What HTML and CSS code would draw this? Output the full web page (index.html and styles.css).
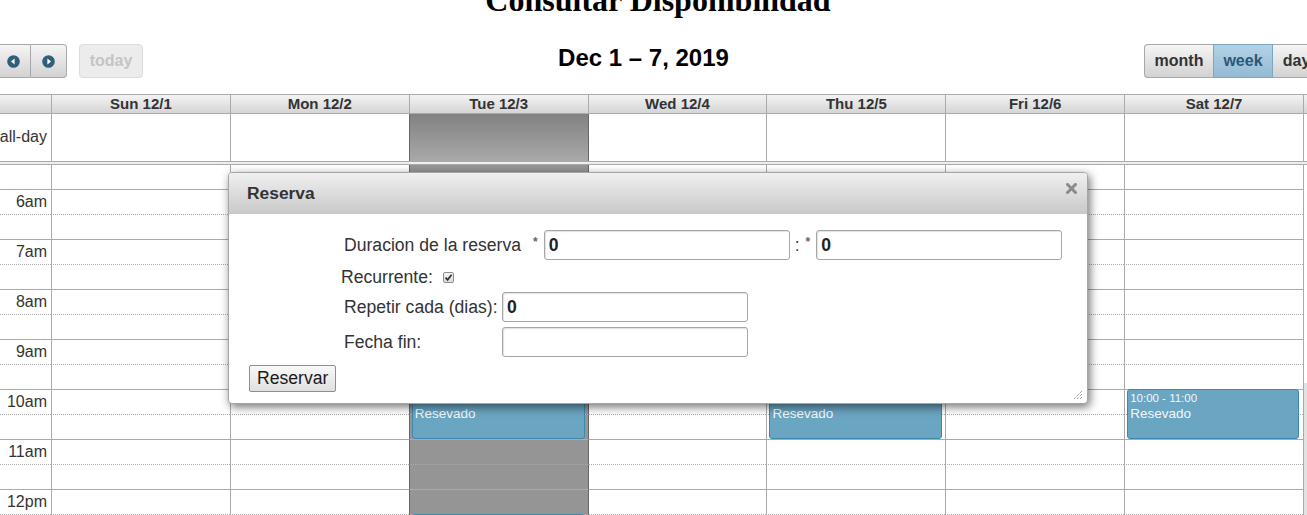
FILE: index.html
```html
<!DOCTYPE html>
<html lang="es">
<head>
<meta charset="utf-8">
<title>Consultar Disponibilidad</title>
<link rel="stylesheet" href="styles.css">
</head>
<body>
<div class="page">
  <h1 class="title">Consultar Disponibilidad</h1>
  <div class="toolbar">
    <div class="tb-left">
      <div class="btn-group">
        <button class="btn btn-icon btn-prev" aria-label="prev"><svg width="13" height="13" viewBox="0 0 13 13"><circle cx="6.5" cy="6.5" r="6.3" fill="#2f5f7b"/><polygon points="4,6.5 7.6,3.6 7.6,9.4" fill="#fff"/></svg></button>
        <button class="btn btn-icon btn-next" aria-label="next"><svg width="13" height="13" viewBox="0 0 13 13"><circle cx="6.5" cy="6.5" r="6.3" fill="#2f5f7b"/><polygon points="9,6.5 5.4,3.6 5.4,9.4" fill="#fff"/></svg></button>
      </div>
      <button class="btn btn-today" disabled>today</button>
    </div>
    <h2 class="range">Dec 1 – 7, 2019</h2>
    <div class="btn-group tb-right">
      <button class="btn btn-month">month</button>
      <button class="btn btn-week active">week</button>
      <button class="btn btn-day">day</button>
    </div>
  </div>

  <div class="cal">
    <div class="head">
      <div class="hc axis"></div>
      <div class="hc">Sun 12/1</div>
      <div class="hc">Mon 12/2</div>
      <div class="hc">Tue 12/3</div>
      <div class="hc">Wed 12/4</div>
      <div class="hc">Thu 12/5</div>
      <div class="hc">Fri 12/6</div>
      <div class="hc">Sat 12/7</div>
      <div class="hc gut"></div>
    </div>
    <div class="allday">
      <div class="ac axis">all-day</div>
      <div class="ac"></div>
      <div class="ac"></div>
      <div class="ac tue"></div>
      <div class="ac wed"></div>
      <div class="ac"></div>
      <div class="ac"></div>
      <div class="ac"></div>
      <div class="ac gut"></div>
    </div>
    <div class="divider"></div>
    <div class="tg">
      <div class="slots">
        <div class="row first"><div class="ax"></div><div class="c"></div><div class="c"></div><div class="c tue"></div><div class="c wed"></div><div class="c"></div><div class="c"></div><div class="c"></div></div>
        <div class="row"><div class="ax">6am</div><div class="c"></div><div class="c"></div><div class="c tue"></div><div class="c wed"></div><div class="c"></div><div class="c"></div><div class="c"></div></div>
        <div class="row half"><div class="ax"></div><div class="c"></div><div class="c"></div><div class="c tue"></div><div class="c wed"></div><div class="c"></div><div class="c"></div><div class="c"></div></div>
        <div class="row"><div class="ax">7am</div><div class="c"></div><div class="c"></div><div class="c tue"></div><div class="c wed"></div><div class="c"></div><div class="c"></div><div class="c"></div></div>
        <div class="row half"><div class="ax"></div><div class="c"></div><div class="c"></div><div class="c tue"></div><div class="c wed"></div><div class="c"></div><div class="c"></div><div class="c"></div></div>
        <div class="row"><div class="ax">8am</div><div class="c"></div><div class="c"></div><div class="c tue"></div><div class="c wed"></div><div class="c"></div><div class="c"></div><div class="c"></div></div>
        <div class="row half"><div class="ax"></div><div class="c"></div><div class="c"></div><div class="c tue"></div><div class="c wed"></div><div class="c"></div><div class="c"></div><div class="c"></div></div>
        <div class="row"><div class="ax">9am</div><div class="c"></div><div class="c"></div><div class="c tue"></div><div class="c wed"></div><div class="c"></div><div class="c"></div><div class="c"></div></div>
        <div class="row half"><div class="ax"></div><div class="c"></div><div class="c"></div><div class="c tue"></div><div class="c wed"></div><div class="c"></div><div class="c"></div><div class="c"></div></div>
        <div class="row"><div class="ax">10am</div><div class="c"></div><div class="c"></div>
          <div class="c tue"><div class="ev"><div class="ev-time">10:00 - 11:00</div><div class="ev-title">Resevado</div></div></div>
          <div class="c wed"></div>
          <div class="c"><div class="ev"><div class="ev-time">10:00 - 11:00</div><div class="ev-title">Resevado</div></div></div>
          <div class="c"></div>
          <div class="c"><div class="ev ev-last"><div class="ev-time">10:00 - 11:00</div><div class="ev-title">Resevado</div></div></div>
        </div>
        <div class="row half"><div class="ax"></div><div class="c"></div><div class="c"></div><div class="c tue"></div><div class="c wed"></div><div class="c"></div><div class="c"></div><div class="c"></div></div>
        <div class="row"><div class="ax">11am</div><div class="c"></div><div class="c"></div><div class="c tue"></div><div class="c wed"></div><div class="c"></div><div class="c"></div><div class="c"></div></div>
        <div class="row half"><div class="ax"></div><div class="c"></div><div class="c"></div><div class="c tue"></div><div class="c wed"></div><div class="c"></div><div class="c"></div><div class="c"></div></div>
        <div class="row"><div class="ax">12pm</div><div class="c"></div><div class="c"></div><div class="c tue"></div><div class="c wed"></div><div class="c"></div><div class="c"></div><div class="c"></div></div>
        <div class="row half"><div class="ax"></div><div class="c"></div><div class="c"></div>
          <div class="c tue"><div class="ev"></div></div>
          <div class="c wed"></div><div class="c"></div><div class="c"></div><div class="c"></div></div>
      </div>
      <div class="scroll"><div class="thumb"></div></div>
    </div>
  </div>
</div>

<div class="dialog">
  <div class="dlg-title">
    <span class="dlg-name">Reserva</span>
    <span class="dlg-close" aria-label="close"><svg width="11" height="11" viewBox="0 0 11 11"><path d="M1.5 1.5 L9.5 9.5 M9.5 1.5 L1.5 9.5" stroke="#8a8a8a" stroke-width="3" stroke-linecap="square"/></svg></span>
  </div>
  <div class="dlg-body">
    <div class="frow r1">
      <label class="lbl">Duracion de la reserva</label><span class="req req-a">*</span><input class="inp" type="text" value="0"><span class="colon">:</span><span class="req req-b">*</span><input class="inp" type="text" value="0">
    </div>
    <div class="frow r2">
      <label class="lbl-plain">Recurrente:</label>
      <span class="chk"><svg width="9" height="9" viewBox="0 0 9 9"><path d="M1.5 4.6 L3.6 6.8 L7.6 1.8" fill="none" stroke="#333" stroke-width="1.8"/></svg></span>
    </div>
    <div class="frow r3">
      <label class="lbl fixed">Repetir cada (dias):</label><input class="inp" type="text" value="0">
    </div>
    <div class="frow r4">
      <label class="lbl fixed">Fecha fin:</label><input class="inp" type="text" value="">
    </div>
    <button class="btn-res">Reservar</button>
  </div>
  <svg class="grip" width="10" height="10" viewBox="0 0 10 10"><path d="M9 1 L1 9 M9 4 L4 9 M9 7 L7 9" stroke="#777" stroke-width="1" stroke-dasharray="1 1"/></svg>
</div>
</body>
</html>
```

FILE: styles.css
```css
html, body {
  margin: 0;
  overflow: hidden;
  background: #fff;
}
body {
  width: 1307px;
  height: 515px;
  position: relative;
  font-family: "Liberation Sans", Arial, sans-serif;
  color: #333;
}

.page {
  width: 1326px;
  margin: -17px 0 0 -5px;
}

.title {
  margin: 0;
  font-family: "Liberation Serif", "Times New Roman", serif;
  font-weight: 700;
  font-size: 32px;
  line-height: 35px;
  color: #000;
  text-align: center;
}

/* toolbar */
.toolbar {
  display: flex;
  align-items: flex-start;
  height: 34px;
  margin: 26px 0 16px;
}
.tb-left {
  display: flex;
}
.btn-group {
  display: flex;
}
.btn {
  box-sizing: border-box;
  height: 34px;
  margin: 0;
  padding: 0;
  font-family: "Liberation Sans", Arial, sans-serif;
  font-weight: 700;
  font-size: 16px;
  color: #333;
  border: 1px solid #a8a8a8;
  background: linear-gradient(#f5f5f5, #d2d2d2);
  display: flex;
  align-items: center;
  justify-content: center;
}
.btn-prev {
  width: 36px;
  border-radius: 4px 0 0 4px;
}
.btn-next {
  width: 36px;
  border-left: 0;
  border-radius: 0 4px 4px 0;
}
.btn-icon svg {
  display: block;
}
.btn-today {
  width: 64px;
  margin-left: 12px;
  border-color: #dcdcdc;
  border-radius: 4px;
  background: #ececec;
  color: #c4c4c4;
}
.range {
  flex: 1;
  margin: 0;
  text-align: center;
  font-size: 24px;
  font-weight: 700;
  line-height: 28px;
  color: #000;
}
.btn-month {
  width: 69px;
  border-right: 0;
  border-radius: 4px 0 0 4px;
}
.btn-week {
  width: 60px;
}
.btn-week.active {
  background: linear-gradient(#b3d2e6, #93bad4);
  border-color: #7ba6c4;
  color: #2b587a;
}
.btn-day {
  width: 48px;
  border-left: 0;
  border-radius: 0 4px 4px 0;
}

/* calendar */
.head,
.allday {
  display: grid;
  grid-template-columns: 56px repeat(7, 1fr) 18px;
}
.head {
  border-top: 1px solid #aaa;
  border-bottom: 1px solid #aaa;
  background: linear-gradient(#f3f3f3, #d5d5d5);
}
.hc {
  height: 18px;
  line-height: 17px;
  text-align: center;
  font-weight: 700;
  font-size: 15px;
  color: #333;
}
.hc + .hc {
  border-left: 1px solid #aaa;
}
.allday {
  height: 47px;
}
.ac + .ac {
  border-left: 1px solid #aaa;
}
.ac.axis {
  text-align: right;
  padding-right: 4px;
  line-height: 46px;
  font-size: 16px;
  color: #333;
  white-space: nowrap;
}
.ac.tue {
  background: linear-gradient(#818181, #a9a9a9);
  border-left-color: #666;
}
.ac.wed {
  border-left-color: #666;
}
.divider {
  height: 2px;
  background: #eee;
  border-top: 1px solid #aaa;
  border-bottom: 1px solid #aaa;
}

.tg {
  display: flex;
}
.slots {
  width: 1308px;
}
.row {
  display: grid;
  grid-template-columns: 56px repeat(7, 1fr);
}
.row > div {
  box-sizing: border-box;
  height: 25px;
  border-top: 1px solid #aaa;
}
.row.half > div {
  border-top-style: dotted;
}
.row.first > div {
  border-top: 0;
  height: 24px;
}
.ax {
  text-align: right;
  padding-right: 4px;
  line-height: 23px;
  font-size: 16px;
  color: #333;
  white-space: nowrap;
}
.c {
  position: relative;
  border-left: 1px solid #aaa;
}
.c.tue {
  background: #959595;
  border-left-color: #666;
}
.c.wed {
  border-left-color: #666;
}
.scroll {
  width: 17px;
  border-left: 1px solid #aaa;
  background: #fff;
}
.thumb {
  margin-top: 218px;
  height: 200px;
  background: #e2e2e2;
}

/* events */
.ev {
  position: absolute;
  top: -1px;
  left: 2px;
  right: 3px;
  height: 50px;
  box-sizing: border-box;
  padding: 1px 2px;
  background: #6aa5c2;
  border: 1px solid #3d89ae;
  border-radius: 3px;
  color: #f4f7fa;
  z-index: 1;
  overflow: hidden;
}
.ev-last {
  right: 4px;
}
.ev-time {
  font-size: 11.5px;
  line-height: 14px;
}
.ev-title {
  font-size: 13.5px;
  line-height: 17px;
}

/* dialog */
.dialog {
  position: absolute;
  left: 228px;
  top: 172px;
  width: 860px;
  height: 232px;
  box-sizing: border-box;
  border: 1px solid #a6a6a6;
  border-radius: 4px;
  background: #fff;
  box-shadow: 2px 3px 10px rgba(0, 0, 0, 0.55);
  z-index: 10;
  font-size: 17.6px;
  color: #333;
}
.dlg-title {
  height: 41px;
  display: flex;
  justify-content: space-between;
  align-items: center;
  padding: 0 10px 0 18px;
  background: linear-gradient(#f0f0f0, #c8c8c8);
  border-radius: 3px 3px 0 0;
}
.dlg-name {
  font-weight: 700;
  font-size: 17.4px;
  color: #333;
}
.dlg-close {
  align-self: flex-start;
  margin-top: 10px;
  display: block;
  height: 11px;
}
.dlg-close svg {
  display: block;
}
.dlg-body {
  padding: 16px 20px 0;
}
.frow {
  display: flex;
  align-items: center;
  margin-left: 92px;
}
.r1 {
  height: 30px;
}
.r2 {
  height: 28px;
  margin-top: 3px;
}
.r3 {
  height: 30px;
  margin-top: 1px;
}
.r4 {
  height: 30px;
  margin-top: 5px;
}
.lbl {
  box-sizing: border-box;
  padding-left: 3px;
  white-space: nowrap;
}
.lbl.fixed {
  width: 161px;
}
.lbl-plain {
  white-space: nowrap;
}
.req {
  align-self: flex-start;
  margin-top: 5px;
  font-size: 12px;
  font-weight: 700;
  color: #666;
}
.req-a {
  margin-left: 12px;
  margin-right: 6px;
}
.req-b {
  margin-right: 6px;
}
.colon {
  margin-left: 5px;
  margin-right: 6px;
  color: #444;
}
.inp {
  box-sizing: border-box;
  width: 246px;
  height: 30px;
  margin: 0;
  padding: 0 4px;
  border: 1px solid #a6a6a6;
  border-radius: 3px;
  box-shadow: inset 1px 1px 1px rgba(0, 0, 0, 0.12);
  font-family: "Liberation Sans", Arial, sans-serif;
  font-size: 17.6px;
  font-weight: 700;
  color: #222;
  background: #fff;
}
.chk {
  box-sizing: border-box;
  width: 11px;
  height: 11px;
  margin-left: 10px;
  border: 1px solid #8d8d8d;
  border-radius: 2px;
  background: linear-gradient(#f4f4f4, #dcdcdc);
  display: flex;
  align-items: center;
  justify-content: center;
}
.chk svg {
  display: block;
}
.btn-res {
  display: block;
  box-sizing: border-box;
  height: 27px;
  margin-top: 8px;
  padding: 0 7px;
  border: 1px solid #8e8e8e;
  border-radius: 2px;
  background: linear-gradient(#f8f8f8, #e0e0e0);
  font-family: "Liberation Sans", Arial, sans-serif;
  font-size: 17.6px;
  color: #1a1a1a;
}
.grip {
  position: absolute;
  right: 4px;
  bottom: 3px;
}
```
